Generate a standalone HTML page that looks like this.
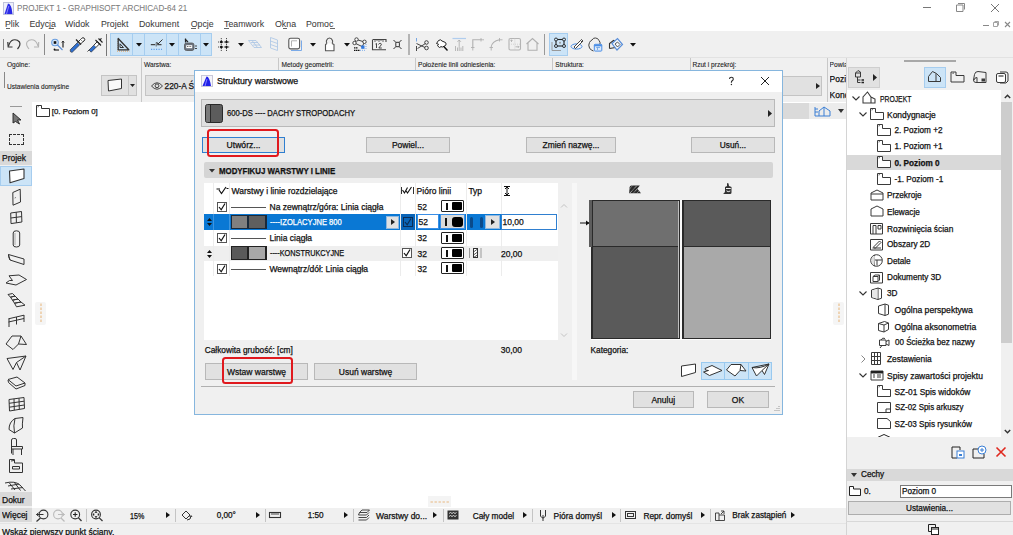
<!DOCTYPE html>
<html><head><meta charset="utf-8">
<style>
*{margin:0;padding:0;box-sizing:border-box}
html,body{width:1013px;height:535px;overflow:hidden;background:#fff;font-family:"Liberation Sans",sans-serif;color:#000}
.a{position:absolute}
.t{position:absolute;white-space:nowrap;font-size:9px;line-height:10px;-webkit-text-stroke:0.25px currentColor}
.btn{position:absolute;background:#e1e1e1;border:1px solid #b8b8b8}
.bt{position:absolute;white-space:nowrap;font-size:9px;line-height:10px;text-align:center;-webkit-text-stroke:0.25px currentColor;color:#111}
svg{position:absolute;overflow:visible}
</style></head><body>

<!-- TITLE BAR -->
<svg style="left:3px;top:2px" width="11" height="13" viewBox="0 0 11 13"><rect x="0.5" y="0.5" width="10" height="12" fill="#eef0fa" stroke="#c0c4dc"/><path d="M1.5 12 L5 1.5 Q8.5 1.5 9.5 12 Z" fill="#2a2ae6"/><path d="M3.5 12 L5.8 4" stroke="#9a9aff" stroke-width="0.8"/></svg>
<div class="t" style="left:17px;top:3px;font-size:8.9px;color:#7a7a7a;-webkit-text-stroke:0.05px #7a7a7a;transform:scaleX(0.91);transform-origin:0 0">PROJEKT 1 - GRAPHISOFT ARCHICAD-64 21</div>
<div class="a" style="left:923px;top:7px;width:8px;height:1px;background:#777"></div>
<svg style="left:956px;top:3px" width="9" height="9" viewBox="0 0 9 9"><path d="M2 0.5 H8.5 V6.5 M0.5 2 H7 V8.5 H0.5 Z" fill="none" stroke="#888" stroke-linejoin="round"/></svg>
<svg style="left:990.5px;top:3.5px" width="8" height="8"><path d="M0 0 L8 8 M8 0 L0 8" stroke="#666" stroke-width="0.9"/></svg>
<div class="t" style="left:5px;top:19px;font-size:8.8px;color:#3c3c3c;-webkit-text-stroke:0.05px #3c3c3c">Plik</div>
<div class="t" style="left:29.5px;top:19px;font-size:8.8px;color:#3c3c3c;-webkit-text-stroke:0.05px #3c3c3c">Edycja</div>
<div class="t" style="left:65px;top:19px;font-size:8.8px;color:#3c3c3c;-webkit-text-stroke:0.05px #3c3c3c">Widok</div>
<div class="t" style="left:101px;top:19px;font-size:8.8px;color:#3c3c3c;-webkit-text-stroke:0.05px #3c3c3c">Projekt</div>
<div class="t" style="left:139px;top:19px;font-size:8.8px;color:#3c3c3c;-webkit-text-stroke:0.05px #3c3c3c">Dokument</div>
<div class="t" style="left:190.7px;top:19px;font-size:8.8px;color:#3c3c3c;-webkit-text-stroke:0.05px #3c3c3c">Opcje</div>
<div class="t" style="left:224px;top:19px;font-size:8.8px;color:#3c3c3c;-webkit-text-stroke:0.05px #3c3c3c">Teamwork</div>
<div class="t" style="left:275px;top:19px;font-size:8.8px;color:#3c3c3c;-webkit-text-stroke:0.05px #3c3c3c">Okna</div>
<div class="t" style="left:306px;top:19px;font-size:8.8px;color:#3c3c3c;-webkit-text-stroke:0.05px #3c3c3c">Pomoc</div>
<div class="a" style="left:6px;top:27.8px;width:4px;height:1px;background:#666"></div>
<div class="a" style="left:50px;top:27.8px;width:4px;height:1px;background:#666"></div>
<div class="a" style="left:190.5px;top:27.8px;width:5px;height:1px;background:#666"></div>
<div class="a" style="left:224px;top:27.8px;width:5px;height:1px;background:#666"></div>
<div class="a" style="left:283px;top:27.8px;width:4px;height:1px;background:#666"></div>
<div class="a" style="left:330px;top:27.8px;width:5px;height:1px;background:#666"></div>
<div class="a" style="left:983px;top:25px;width:6px;height:1.2px;background:#888"></div>
<svg style="left:993px;top:21px" width="6" height="6" viewBox="0 0 6 6"><path d="M1.5 0.5 H5.5 V4.5 M0.5 1.5 H4.5 V5.5 H0.5 Z" fill="none" stroke="#999" stroke-width="0.9"/></svg>
<svg style="left:1004.5px;top:22px" width="5" height="5"><path d="M0 0 L5 5 M5 0 L0 5" stroke="#888" stroke-width="1.1"/></svg>
<!-- TOOLBAR -->
<div class="a" style="left:0;top:31px;width:1013px;height:26px;background:#f0f0f0"></div>
<div class="a" style="left:0;top:56.5px;width:1013px;height:1px;background:#e2e2e2"></div>
<div class="a" style="left:3px;top:39px;width:1.2px;height:10.5px;background:#888"></div>
<div class="a" style="left:43.5px;top:34.2px;width:1.4px;height:20.5px;background:#8a8a8a"></div>
<div class="a" style="left:105.5px;top:34px;width:1px;height:22px;background:#777"></div>
<div class="a" style="left:408.3px;top:34px;width:1.6px;height:21px;background:#b4b4b4"></div>
<div class="a" style="left:544px;top:34px;width:1.3px;height:21px;background:#999"></div>
<svg style="left:0px;top:30px" width="65" height="27" viewBox="0 0 65 27"><path d="M17.5 19 Q21 15 19.5 12 Q17 9 13 10 Q10 11 8.5 16" fill="none" stroke="#333" stroke-width="1.2"/><path d="M7.8 12 L8.2 17 L12.5 17" fill="none" stroke="#333" stroke-width="1.2"/></svg>
<svg style="left:0px;top:30px" width="65" height="27" viewBox="0 0 65 27"><path d="M29 19 Q25.5 15 27 12 Q29.5 9 33.5 10 Q36.5 11 38 16" fill="none" stroke="#b4b4b4" stroke-width="1.1"/><path d="M38.7 12 L38.5 17 L34 17" fill="none" stroke="#b4b4b4" stroke-width="1.1"/></svg>
<svg style="left:0px;top:30px" width="65" height="27" viewBox="0 0 65 27"><circle cx="55" cy="12.5" r="3.3" fill="#d6e6f8" stroke="#6a9ee0" stroke-width="1.1"/><rect x="53.7" y="11.2" width="2.6" height="2.6" fill="#111"/><path d="M57.5 15 L62.5 20" stroke="#5a8ed8" stroke-width="1.1"/><path d="M63 12 V17.5" stroke="#111" stroke-width="1.1"/><path d="M61.8 12.5 L63 11 L64.2 12.5" stroke="#111" fill="none" stroke-width="0.9"/><path d="M54.5 20 H59" stroke="#333" stroke-width="1.3"/><circle cx="54.5" cy="19.5" r="0.9" fill="#111"/></svg>
<svg style="left:60px;top:30px" width="65" height="27" viewBox="0 0 65 27"><path d="M10.2 19.8 L17.5 12.5 L19.8 14.8 L12.5 22 Q10 23 10.2 19.8 Z" fill="#2f6fd0" stroke="#222" stroke-width="0.6"/><path d="M17.5 12.5 L20.5 9.5 L22.8 11.8 L19.8 14.8" fill="#fff" stroke="#222" stroke-width="0.9"/><path d="M20.5 9.5 L21.5 8.5 Q23 7 24.2 8.2 Q25.5 9.5 24 11 L22.8 11.8" fill="#fff" stroke="#222" stroke-width="1"/><path d="M16 9.5 L21 14.5" stroke="#222" stroke-width="1.2"/></svg>
<svg style="left:60px;top:30px" width="65" height="27" viewBox="0 0 65 27"><path d="M27.5 21.5 L29.5 19.5" stroke="#333" stroke-width="0.9"/><path d="M29 20 L34 15 L36.2 17.2 L31.2 22.2 Z" fill="#2f6fd0" stroke="#222" stroke-width="0.6"/><path d="M34 15 L37.5 11.5 L39.7 13.7 L36.2 17.2" fill="#fff" stroke="#222" stroke-width="0.9"/><path d="M35.5 10 L41 15.5 M38.5 8.5 L42.5 12.5 M39.8 10 L41.5 8.3" stroke="#222" stroke-width="1.1"/></svg>
<div class="a" style="left:110px;top:32.5px;width:102px;height:23px;background:#cce4f7;border:1px solid #a6cdef"></div>
<div class="a" style="left:132px;top:33px;width:1px;height:22px;background:#a6cdef"></div>
<div class="a" style="left:143.5px;top:33px;width:1px;height:22px;background:#a6cdef"></div>
<div class="a" style="left:166px;top:33px;width:1px;height:22px;background:#a6cdef"></div>
<div class="a" style="left:177.5px;top:33px;width:1px;height:22px;background:#a6cdef"></div>
<div class="a" style="left:200px;top:33px;width:1px;height:22px;background:#a6cdef"></div>
<svg style="left:108px;top:30px" width="65" height="27" viewBox="0 0 65 27"><path d="M9.5 9 V20.5" stroke="#bbb" stroke-dasharray="1 1"/><path d="M9 21.2 H21.5" stroke="#e8a868" stroke-dasharray="1 1"/><path d="M10.2 8.5 V19.8 H20.8 Z" fill="none" stroke="#333" stroke-width="1.3" stroke-linejoin="round"/><path d="M12 13.8 V17.5 H15.5 Z" fill="none" stroke="#333" stroke-width="1"/></svg>
<svg style="left:108px;top:30px" width="65" height="27" viewBox="0 0 65 27"><path d="M42.8 14.6 H47.2 M49.2 14.6 H53.5" stroke="#444" stroke-width="1.1"/><path d="M48.2 12.5 V16.5" stroke="#444" stroke-width="0.8"/><path d="M48.6 12 L50 14 L54.5 9.5" stroke="#333" stroke-width="1" fill="none"/><path d="M43 19.3 H54" stroke="#4a8ee6" stroke-width="1" stroke-dasharray="1.2 1.3"/></svg>
<svg style="left:170px;top:30px" width="65" height="27" viewBox="0 0 65 27"><path d="M15.5 8.5 V12.5 M15 9 L18 12" stroke="#222" stroke-width="1.2"/><rect x="14.5" y="13" width="9.5" height="7.5" rx="2" fill="#6b7480" stroke="#555" stroke-width="0.8"/><rect x="16.2" y="15.2" width="6" height="3" fill="#fff"/><path d="M17 16.5 H21.5" stroke="#444" stroke-width="0.8" stroke-dasharray="1 0.6"/><path d="M25 16 H27 M25 18.5 H27" stroke="#333" stroke-width="0.9"/></svg>
<svg style="left:135.5px;top:43px" width="6" height="3.5"><path d="M0 0 H6 L3 3.5Z" fill="#111"/></svg>
<svg style="left:169.3px;top:43px" width="6" height="3.5"><path d="M0 0 H6 L3 3.5Z" fill="#111"/></svg>
<svg style="left:203px;top:43px" width="6" height="3.5"><path d="M0 0 H6 L3 3.5Z" fill="#111"/></svg>
<svg style="left:170px;top:30px" width="65" height="27" viewBox="0 0 65 27"><path d="M51.3 8 V21 M56.5 8 V21 M48 12 H60 M48 17 H60" stroke="#222" stroke-width="0.8" stroke-dasharray="1.2 0.8"/><circle cx="51.3" cy="12" r="1.3" fill="#111"/><circle cx="56.5" cy="12" r="1.3" fill="#111"/><circle cx="51.3" cy="17" r="1.3" fill="#111"/><circle cx="56.5" cy="17" r="1.3" fill="#111"/></svg>
<svg style="left:238px;top:43px" width="6" height="3.5"><path d="M0 0 H6 L3 3.5Z" fill="#111"/></svg>
<svg style="left:248px;top:40px" width="14" height="8" viewBox="0 0 14 8"><path d="M0.5 0.5 H8 L13.5 7.5 H6 Z M3 2.5 H10 M5 5 H12 M4 0.5 L9.5 7.5" fill="none" stroke="#a8c4e4" stroke-width="0.8"/></svg>
<svg style="left:270px;top:37px" width="8" height="14" viewBox="0 0 8 14"><path d="M0.5 0.5 L7.5 3 V13.5 L0.5 11 Z M0.5 4 L7.5 6.5 M0.5 7.5 L7.5 10" fill="none" stroke="#a8c4e4" stroke-width="0.8"/></svg>
<svg style="left:285px;top:30px" width="65" height="27" viewBox="0 0 65 27"><path d="M6 20.5 H16.5 V10.5" fill="none" stroke="#7aaae8" stroke-width="1"/><rect x="3.8" y="8.3" width="10.8" height="10.6" rx="1.8" fill="#fff" stroke="#555" stroke-width="1.1"/><path d="M6.5 16.5 V10.8 H12" fill="none" stroke="#aaa" stroke-width="0.9"/></svg>
<svg style="left:309.5px;top:43px" width="6" height="3.5"><path d="M0 0 H6 L3 3.5Z" fill="#111"/></svg>
<svg style="left:285px;top:30px" width="65" height="27" viewBox="0 0 65 27"><path d="M42 13.5 Q41 12 41.5 10.5 Q42.5 8 44.5 8 Q46.5 8 47.5 10.5 Q48 12 47 13.5" fill="none" stroke="#555" stroke-width="1.1"/><path d="M42 13.5 L40.5 14.5 V20.8 H49 V14.5 L47 13.5" fill="#fff" stroke="#555" stroke-width="1.1" stroke-linejoin="round"/></svg>
<svg style="left:343.5px;top:43px" width="6" height="3.5"><path d="M0 0 H6 L3 3.5Z" fill="#111"/></svg>
<svg style="left:345px;top:30px" width="65" height="27" viewBox="0 0 65 27"><path d="M11.5 9.5 L19.5 12 M11.5 9.5 L9.5 13 M9.5 13 L17 16.5 M19.5 12 L17.5 16" stroke="#333" stroke-width="0.9" fill="none"/><circle cx="11.5" cy="9.5" r="1.7" fill="#fff" stroke="#333" stroke-width="0.9"/><circle cx="9.5" cy="13" r="1.7" fill="#fff" stroke="#333" stroke-width="0.9"/><circle cx="19.5" cy="11.8" r="1.7" fill="#fff" stroke="#333" stroke-width="0.9"/><rect x="16.2" y="15.5" width="3.3" height="3.3" fill="#2f78e0"/><path d="M21 14 V20 M15 20.3 H21" stroke="#4a8ee6" stroke-width="0.7" stroke-dasharray="1 1"/><path d="M9 17.8 H13 M9 20.3 H15" stroke="#111" stroke-width="1.3" stroke-dasharray="1.5 0.5"/></svg>
<svg style="left:345px;top:30px" width="65" height="27" viewBox="0 0 65 27"><path d="M28 9.5 H41 V12 M27.5 9.5 V19.7 H41" fill="none" stroke="#444" stroke-width="1.1"/><path d="M30 9.5 V12 M32 9.5 V11 M34 9.5 V12 M36 9.5 V11 M38 9.5 V12" stroke="#444" stroke-width="0.8"/><path d="M30.5 14 L31.5 13.5 V18 M33.5 14.5 Q34 13.3 35.2 13.3 Q36.5 13.5 36.3 14.8 L33.8 18 H36.8" fill="none" stroke="#333" stroke-width="0.9"/></svg>
<svg style="left:345px;top:30px" width="65" height="27" viewBox="0 0 65 27"><path d="M48.5 10 L51.5 13 M56.5 10 L53.5 13 M48.5 19 L51.5 16 M56.5 19 L53.5 16" stroke="#333" stroke-width="1"/><rect x="50.8" y="12.3" width="3.6" height="4.4" rx="0.8" fill="none" stroke="#333" stroke-width="1"/></svg>
<svg style="left:405px;top:30px" width="65" height="27" viewBox="0 0 65 27"><path d="M11.5 8 V11.5" stroke="#6a9ee0" stroke-width="0.9"/><path d="M11.5 16 V21" stroke="#333" stroke-width="0.9"/><path d="M11.5 13.5 L20 17.5 M12.5 18.5 L20.5 13.5" stroke="#333" stroke-width="0.9"/><circle cx="21.5" cy="12.5" r="1.8" fill="none" stroke="#333" stroke-width="0.9"/><circle cx="21.5" cy="18" r="1.8" fill="none" stroke="#333" stroke-width="0.9"/></svg>
<svg style="left:405px;top:30px" width="65" height="27" viewBox="0 0 65 27"><path d="M33.5 10.5 L35.5 9.8 L37 11 L40.5 12.5 Q41.8 14 40.5 15.5 L37.5 17 Q36 16 34.5 17.5 L32.5 15.8 L33.5 14.2 L31.5 13.5 Z" fill="#fff" stroke="#222" stroke-width="1"/><path d="M38.8 16.5 L42.5 20.5" stroke="#111" stroke-width="1.4"/></svg>
<svg style="left:405px;top:30px" width="65" height="27" viewBox="0 0 65 27"><path d="M47.5 8.5 H61" stroke="#b0cdee" stroke-width="1.2"/><path d="M54.2 10 V16.5 M52.5 11.8 L54.2 10 L55.9 11.8" stroke="#aaa" stroke-width="0.8" fill="none"/><path d="M50.5 16 V21 M52.5 17.5 V21 M54.2 16.5 V21 M56 17.5 V21 M57.8 16 V21" stroke="#aaa" stroke-width="0.8"/></svg>
<svg style="left:465px;top:30px" width="65" height="27" viewBox="0 0 65 27"><path d="M7.8 17.5 V9.8 H17.5" fill="none" stroke="#b0b0b0" stroke-width="1.1"/><path d="M16 8 V11.5 M17.5 9.8 H19 M6 17.5 H9.5 M7.8 17.5 V20.5" stroke="#b0b0b0" stroke-width="0.9"/></svg>
<svg style="left:465px;top:30px" width="65" height="27" viewBox="0 0 65 27"><path d="M26 17.5 Q27 11 34.5 9.8" fill="none" stroke="#b0b0b0" stroke-width="1.1"/><path d="M34.5 8 V11.5 M34.5 9.8 H37.5 M24.5 17.5 H28 M26.2 17.5 V20.5" stroke="#b0b0b0" stroke-width="0.9"/></svg>
<svg style="left:465px;top:30px" width="65" height="27" viewBox="0 0 65 27"><rect x="44" y="8.5" width="11.5" height="11.5" rx="1.5" fill="none" stroke="#b4b4b4" stroke-width="1.1"/><path d="M49.8 8.5 V20 M44 14.2 H55.5" stroke="#c8c8c8" stroke-width="0.7" stroke-dasharray="1 1"/><path d="M46.5 12 V9.8 M45.5 10.8 L46.5 9.8 L47.5 10.8 M50.5 16.8 H54 M53 15.8 L54 16.8 L53 17.8" stroke="#aaa" stroke-width="0.8" fill="none"/></svg>
<svg style="left:465px;top:30px" width="65" height="27" viewBox="0 0 65 27"><path d="M61.5 14 L67.5 8.5 L73.5 14 M63 12.8 V20.3 H72 V12.8" stroke="#b0b0b0" stroke-width="1.1" fill="none"/></svg>
<div class="a" style="left:548.5px;top:32.5px;width:19px;height:23px;background:#cce4f7;border:1px solid #a6cdef"></div>
<svg style="left:525px;top:30px" width="65" height="27" viewBox="0 0 65 27"><path d="M27 12 V20.5 H36" fill="none" stroke="#999" stroke-width="1"/><rect x="31" y="9.5" width="8" height="6.5" fill="none" stroke="#222" stroke-width="1.1"/><circle cx="35" cy="12.8" r="1" fill="#999"/><circle cx="31" cy="9.5" r="1.5" fill="#cce4f7" stroke="#222" stroke-width="0.9"/><circle cx="39" cy="9.5" r="1.5" fill="#cce4f7" stroke="#222" stroke-width="0.9"/><circle cx="31" cy="16" r="1.5" fill="#cce4f7" stroke="#222" stroke-width="0.9"/><circle cx="39" cy="16" r="1.5" fill="#cce4f7" stroke="#222" stroke-width="0.9"/></svg>
<svg style="left:525px;top:30px" width="65" height="27" viewBox="0 0 65 27"><ellipse cx="51.5" cy="16.5" rx="5.5" ry="2.6" fill="none" stroke="#4a8ee6" stroke-width="1"/><path d="M49 17 L55.5 10.5 L57 12 L50.5 18.5 Z M55.5 10.5 L56.5 9.5 L58 11 L57 12" fill="#fff" stroke="#333" stroke-width="0.9"/></svg>
<svg style="left:580px;top:30px" width="65" height="27" viewBox="0 0 65 27"><path d="M13.5 21 Q11 20.5 9.5 18 Q8 15 9.5 12.5 Q10.5 10.5 12 10 Q13.5 7.5 15.5 8 Q18 8 19 10.5 Q20.5 12 20 14.5" fill="none" stroke="#444" stroke-width="1"/><rect x="14.3" y="14.3" width="7.5" height="6.8" rx="0.8" fill="#dbe9fa" stroke="#4a8ee6" stroke-width="1"/><path d="M14.3 15.5 H21.8" stroke="#4a8ee6" stroke-width="1.6"/><path d="M16.2 17.5 H20 M17.5 17.5 V20" stroke="#6a9ee0" stroke-width="0.8"/></svg>
<svg style="left:580px;top:30px" width="65" height="27" viewBox="0 0 65 27"><path d="M29.5 18.5 V13.5 L33.5 10.5 L36 12 M29.5 18.5 L35.5 17.5" fill="none" stroke="#333" stroke-width="1.1"/><path d="M32 13.5 L37.5 8.5 L42.5 14.5 L37 20 Z" fill="#f4f8fd" stroke="#5a8ed8" stroke-width="1.2"/><path d="M35 14 L37.5 12 L40 14.5 L37.5 17 Z" fill="none" stroke="#333" stroke-width="0.8"/></svg>
<svg style="left:630px;top:43px" width="6" height="3.5"><path d="M0 0 H6 L3 3.5Z" fill="#111"/></svg>
<!-- INFO BOX -->
<div class="a" style="left:0;top:57.5px;width:846px;height:44.5px;background:#f0f0f0"></div>
<div class="a" style="left:140.5px;top:58px;width:1px;height:44px;background:#c8c8c8"></div>
<div class="a" style="left:689.5px;top:58px;width:1px;height:44px;background:#c8c8c8"></div>
<div class="a" style="left:826.5px;top:58px;width:1px;height:44px;background:#c8c8c8"></div>
<div class="a" style="left:3.5px;top:72px;width:1px;height:16px;background:#888"></div>
<div class="t" style="left:6.9px;top:60px;font-size:6.6px;color:#222;-webkit-text-stroke:0.1px #222">Ogólne:</div>
<div class="t" style="left:6.9px;top:82px;font-size:6.6px;color:#222;-webkit-text-stroke:0.1px #222">Ustawienia domyślne</div>
<div class="a" style="left:101px;top:75.3px;width:35.6px;height:20.5px;background:#e1e1e1;border:1px solid #c4c4c4"></div>
<div class="a" style="left:128px;top:76px;width:1px;height:19px;background:#c8c8c8"></div>
<svg style="left:107px;top:78px" width="16" height="14" viewBox="0 0 16 14"><path d="M1 2.5 L14.5 1 V10.5 L1.5 13 Z" fill="#fafafa" stroke="#333"/></svg>
<svg style="left:129.5px;top:84px" width="5" height="3"><path d="M0 0 H5 L2.5 3Z" fill="#222"/></svg>
<div class="t" style="left:144px;top:60px;font-size:6.6px;color:#222;-webkit-text-stroke:0.1px #222">Warstwa:</div>
<div class="a" style="left:144.7px;top:75.3px;width:60px;height:20.5px;background:#e1e1e1;border:1px solid #c4c4c4"></div>
<svg style="left:150.5px;top:82px" width="12" height="8" viewBox="0 0 12 8"><path d="M0.5 4 Q6 -2.5 11.5 4 Q6 10.5 0.5 4 Z" fill="none" stroke="#333" stroke-width="0.9"/><circle cx="6" cy="3.8" r="1.9" fill="none" stroke="#333" stroke-width="0.9"/></svg>
<div class="t" style="left:164.6px;top:80.5px;font-size:8.3px;color:#111">220-A Ś</div>
<div class="t" style="left:281.4px;top:60px;font-size:6.6px;color:#222;-webkit-text-stroke:0.1px #222">Metody geometrii:</div>
<div class="a" style="left:277.7px;top:58px;width:1px;height:12px;background:#c8c8c8"></div>
<div class="a" style="left:414.7px;top:58px;width:1px;height:12px;background:#c8c8c8"></div>
<div class="t" style="left:418px;top:60px;font-size:6.6px;color:#222;-webkit-text-stroke:0.1px #222">Położenie linii odniesienia:</div>
<div class="a" style="left:552.2px;top:58px;width:1px;height:12px;background:#c8c8c8"></div>
<div class="t" style="left:555.3px;top:60px;font-size:6.6px;color:#222;-webkit-text-stroke:0.1px #222">Struktura:</div>
<div class="t" style="left:692.4px;top:60px;font-size:6.6px;color:#222;-webkit-text-stroke:0.1px #222">Rzut i przekrój:</div>
<div class="a" style="left:782px;top:75.5px;width:40.3px;height:20.6px;background:#e1e1e1;border:1px solid #c4c4c4;border-left:none"></div>
<svg style="left:816px;top:82.5px" width="4" height="6"><path d="M0 0 L4 3 L0 6Z" fill="#222"/></svg>
<div class="t" style="left:829.6px;top:60px;font-size:6.6px;color:#222;-webkit-text-stroke:0.1px #222;width:16.5px;overflow:hidden">Powiązania</div>
<div class="t" style="left:829.6px;top:73.5px;font-size:8.5px;color:#111;width:16.5px;overflow:hidden">Poziom</div>
<div class="t" style="left:829.6px;top:89.5px;font-size:8.5px;color:#111;width:16.5px;overflow:hidden">Kondygnacja</div>
<!-- CANVAS -->
<div class="a" style="left:32px;top:102px;width:814px;height:405.5px;background:#fff"></div>
<div class="a" style="left:0;top:102px;width:32px;height:405.5px;background:#f0f0f0"></div>
<svg style="left:36px;top:105px" width="14" height="12" viewBox="0 0 14 12"><path d="M0.5 0.5 H5.5 V3.5 H13.5 V11.5 H0.5 Z" fill="#fff" stroke="#333"/><path d="M1.5 2 L3 1.5" stroke="#333" stroke-width="0.6"/></svg>
<div class="t" style="left:51.7px;top:106.5px;font-size:7.9px;color:#111">[0. Poziom 0]</div>
<div class="a" style="left:783px;top:102.5px;width:26px;height:16px;background:#dadada"></div><div class="a" style="left:809px;top:102.5px;width:37px;height:16px;background:#ececec"></div>
<svg style="left:814px;top:105.5px" width="18" height="11" viewBox="0 0 18 11"><path d="M1 1 V10 H5 M1 3 H4 M1 6 H4" stroke="#3a7fd5" fill="none"/><path d="M5 10 V5 L10 1 L16 5 V10 Z M10 1 V10" stroke="#3a7fd5" fill="none"/></svg>
<svg style="left:838px;top:108.5px" width="6" height="4"><path d="M0 0 H6 L3 4Z" fill="#333"/></svg>
<div class="a" style="left:34.5px;top:301.7px;width:11.3px;height:23px;background:#f5f5f5;border-radius:2px"></div>
<svg style="left:39.5px;top:303px" width="2" height="21"><path d="M1 0.5 V20.5" stroke="#e8b880" stroke-width="1.1" stroke-dasharray="2.4 1.6"/></svg>
<div class="a" style="left:833px;top:301.7px;width:11px;height:23px;background:#f5f5f5;border-radius:2px"></div>
<svg style="left:838px;top:303px" width="2" height="21"><path d="M1 0.5 V20.5" stroke="#e8b880" stroke-width="1.1" stroke-dasharray="2.4 1.6"/></svg>
<div class="a" style="left:428px;top:496.4px;width:23.4px;height:11px;background:#f4f4f4"></div>
<svg style="left:430px;top:500.5px" width="20" height="2"><path d="M0.5 1 H19.5" stroke="#e8b880" stroke-width="1.1" stroke-dasharray="2.4 1.6"/></svg>
<!-- TOOLBOX -->
<div class="a" style="left:10px;top:106px;width:12px;height:1px;background:#999"></div>
<svg style="left:12px;top:112px" width="10" height="13" viewBox="0 0 10 13"><path d="M1 1 L9 8 L5.5 8 L7.5 12 L3.5 9.5 L1 11 Z" fill="#777" stroke="#222" stroke-width="0.9"/></svg>
<div class="a" style="left:9px;top:134px;width:15px;height:11px;border:1.2px dashed #333"></div>
<div class="a" style="left:0;top:150.6px;width:32px;height:14.1px;background:#d9d9d9"></div>
<div class="t" style="left:2px;top:152.5px;font-size:8.5px;color:#111">Projek</div>
<div class="a" style="left:0;top:166px;width:32px;height:20px;background:#cce4f7;border:1px solid #a6cdef"></div>
<svg style="left:0;top:0" width="32" height="500" viewBox="0 0 32 500"><path d="M9.5 171 L24 169 L24 178.5 L10 182.8 Z" fill="#fff" stroke="#333" stroke-width="1.1" stroke-linejoin="round"/><path d="M12.8 192.5 L20.2 189.2 L20.5 202 L13 205.2 Z" fill="none" stroke="#333" stroke-width="1" stroke-linejoin="round"/><path d="M14.8 198 L15.6 197.6" stroke="#333" stroke-width="1"/><path d="M10.7 213 L21.5 211.5 L21.9 222 L11 223.6 Z M16.2 212.2 L16.4 222.8 M10.8 218 L21.7 216.6" fill="none" stroke="#333" stroke-width="1" stroke-linejoin="round"/><path d="M13.2 233 Q13.2 230.8 16.4 230.8 Q19.7 230.8 19.7 233 L19.7 245 Q19.7 247 16.4 247 Q13.2 247 13.2 245 Z" fill="none" stroke="#333" stroke-width="1" stroke-linejoin="round"/><path d="M15 233 V245" stroke="#999" stroke-width="0.8"/><path d="M8.5 254.5 L24 259 L24 264.5 L10 260 Z M8.5 254.5 L8.5 256.5 L10 260" fill="none" stroke="#333" stroke-width="1" stroke-linejoin="round"/><path d="M9 275.8 L19 275 L26.5 279.5 L16 285 L6 283 L9.5 280.5 L12.5 280.5 Z" fill="none" stroke="#333" stroke-width="1" stroke-linejoin="round"/><path d="M8 294.5 L12.5 293.5 L15 296 L10.5 297.2 Z M10.5 297.2 L15 296 L18 299 L12.5 300.2 Z M12.5 300.2 L18 299 L21 302 L14.5 303.2 Z M14.5 303.2 L21 302 L25 305.2 L16.5 306.8 Z" fill="none" stroke="#333" stroke-width="1" stroke-linejoin="round"/><path d="M8.5 318.8 L24 315.2 M8.5 322 L24 318.5 M9 318.5 V327 M16.5 317 V324.5 M24 315 V322" fill="none" stroke="#333" stroke-width="1" stroke-linejoin="round"/><path d="M6 344 L12 336 L21 336 L26.5 344.5 L18.5 344 L13 349.5 Z M21 336 L18.5 344" fill="none" stroke="#333" stroke-width="1" stroke-linejoin="round"/><path d="M7 358.5 L26 356 L20 370 L16.5 362.5 L13 369.5 Z M26 356 L16.5 362.5" fill="none" stroke="#333" stroke-width="1" stroke-linejoin="round"/><path d="M8 379.5 L17 377 L25 383 L16 386 Z M8 380 L8.5 382.5 L16 389 L25 385.5 L25 383" fill="none" stroke="#333" stroke-width="1" stroke-linejoin="round"/><path d="M9 399.5 L24 397.5 L24.5 408.5 L9.5 411 Z M14 398.8 L14.3 410.2 M19 398.2 L19.3 409.5 M9.1 403.3 L24.1 401.2 M9.3 407.2 L24.3 405" fill="none" stroke="#333" stroke-width="1" stroke-linejoin="round"/><path d="M9 429.5 Q9 422 15 418.5 L23 417.5 Q22 425 22.5 428 L14.5 433 Z M15 418.5 Q13 426 14.5 433" fill="none" stroke="#333" stroke-width="1" stroke-linejoin="round"/><path d="M11.5 453.5 V440 Q11.5 438.5 13.5 438.5 L15 438.5 Q16.5 438.5 16.5 440 V446 M11.5 446.5 L22.5 446.5 L22.5 449 M11.5 449 H22.5 M13 449 V455 M21.5 449 V455" fill="none" stroke="#333" stroke-width="1" stroke-linejoin="round"/><path d="M9.5 459.5 H14.5 V463 H22.5 V472.5 H9.5 Z M12.5 466.5 H19.5 V469 H12.5 Z M11 461 L14 460.5" fill="none" stroke="#333" stroke-width="1" stroke-linejoin="round"/><path d="M5 483 Q15 480.5 20 485 L25.5 491 M8 486 L19 484 M11 489 L23 487.5 M9 482.5 L15 490 M14 482 L20.5 490.5" fill="none" stroke="#333" stroke-width="1" stroke-linejoin="round" stroke-width="0.8"/></svg>
<div class="a" style="left:0;top:492.4px;width:32px;height:13.6px;background:#d9d9d9"></div>
<div class="t" style="left:2px;top:494.5px;font-size:8.5px;color:#111">Dokur</div>
<!-- NAV -->
<div class="a" style="left:846px;top:57.5px;width:167px;height:478px;background:#f0f0f0"></div>
<div class="a" style="left:845.5px;top:57.5px;width:1px;height:478px;background:#d4d4d4"></div>
<div class="a" style="left:904px;top:60.3px;width:52px;height:1.6px;background:#a8a8a8"></div>
<div class="a" style="left:847.7px;top:66.6px;width:32px;height:21px;background:#e1e1e1;border:1px solid #cfcfcf"></div>
<svg style="left:873px;top:73.5px" width="4" height="7"><path d="M0 0 L4 3.5 L0 7Z" fill="#222"/></svg>
<div class="a" style="left:924px;top:66.6px;width:22.2px;height:21px;background:#cce4f7;border:1px solid #a6cdef"></div>
<svg style="left:845px;top:60px" width="168" height="32" viewBox="0 0 168 32"><path d="M10.5 17 V13 L13 10.5 L15.5 12 V17 Z M10.5 13 H15.5" fill="none" stroke="#3a3a3a" stroke-width="1" stroke-linejoin="round"/><path d="M12.5 17 V22.5 H15.5 M12.5 20 H15.5" fill="none" stroke="#3a3a3a" stroke-width="1" stroke-linejoin="round"/><path d="M16.5 20 H19 M16.5 22.5 H19" stroke="#222" stroke-width="1.4"/><path d="M83.5 21.5 V16.5 L87.5 11.5 L91.5 13.5 L95.5 17.5 V21.5 Z M91 13.5 V21.5" fill="none" stroke="#3a3a3a" stroke-width="1" stroke-linejoin="round" stroke-width="1.1"/><path d="M106 12 H111 V15.5 H119 V22 H106 Z" fill="none" stroke="#3a3a3a" stroke-width="1" stroke-linejoin="round" stroke-width="1.1"/><path d="M107.5 13.5 L109 13" stroke="#3a3a3a" stroke-width="0.8"/><path d="M129.5 14.5 Q130 11.5 133 11.5 L141 12.5 V22.5 H131 Q128.5 22.5 128.5 20 Z M129 20 Q129.5 17.5 132 17.5 V22.5" fill="none" stroke="#3a3a3a" stroke-width="1" stroke-linejoin="round" stroke-width="1"/><rect x="136.5" y="18.5" width="3.5" height="3" fill="#3a3a3a"/><path d="M155 12 H161 Q163 12 163 14 V21 L161 23 H155" fill="none" stroke="#3a3a3a" stroke-width="1" stroke-linejoin="round"/><rect x="151.5" y="13.5" width="9" height="9" rx="1.5" fill="#fff" stroke="#3a3a3a" stroke-width="1"/><path d="M153.5 16 H158.5" stroke="#3a3a3a" stroke-width="1.2"/></svg>
<div class="a" style="left:846.5px;top:90px;width:154.5px;height:346.5px;background:#fff"></div>
<div class="a" style="left:1001px;top:90px;width:12px;height:347.4px;background:#f0f0f0"></div>
<div class="a" style="left:1001.3px;top:102.2px;width:10.5px;height:240.4px;background:#cdcdcd"></div>
<svg style="left:1003.8px;top:94px" width="7" height="5"><path d="M0.8 4 L3.5 1.2 L6.2 4" stroke="#333" stroke-width="1.4" fill="none"/></svg>
<svg style="left:1003.8px;top:429px" width="7" height="5"><path d="M0.8 1 L3.5 3.8 L6.2 1" stroke="#333" stroke-width="1.4" fill="none"/></svg>
<div class="a" style="left:846.5px;top:155.3px;width:154.5px;height:15.2px;background:#d9d9d9"></div>
<svg style="left:851.9px;top:95.7px" width="8" height="5"><path d="M0.5 0.5 L4 4 L7.5 0.5" stroke="#333" stroke-width="1.1" fill="none"/></svg>
<svg style="left:862px;top:91.2px" width="14" height="13" viewBox="0 0 14 13"><path d="M1 12 V6 L5.5 1 L9 6 L13 8 V12 Z M9 6 V12" fill="none" stroke="#3a3a3a" stroke-width="1.05"/></svg>
<div class="t" style="left:879.6px;top:93.5px;font-size:8.9px;color:#111;transform:scaleX(0.765);transform-origin:0 50%">PROJEKT</div>
<svg style="left:859.1px;top:112px" width="8" height="5"><path d="M0.5 0.5 L4 4 L7.5 0.5" stroke="#333" stroke-width="1.1" fill="none"/></svg>
<svg style="left:870px;top:107.5px" width="14" height="13" viewBox="0 0 14 13"><path d="M0.5 0.5 H5.5 V4.5 H13.5 V11.5 H0.5 Z" fill="#fff" stroke="#3a3a3a"/><path d="M1.5 2 L3 1.5" stroke="#3a3a3a" stroke-width="0.7"/></svg>
<div class="t" style="left:887px;top:109.66px;font-size:8.45px;color:#111;">Kondygnacje</div>
<svg style="left:877px;top:123.69999999999999px" width="14" height="13" viewBox="0 0 14 13"><path d="M0.5 0.5 H5.5 V4.5 H13.5 V11.5 H0.5 Z" fill="#fff" stroke="#3a3a3a"/><path d="M1.5 2 L3 1.5" stroke="#3a3a3a" stroke-width="0.7"/></svg>
<div class="t" style="left:894.5px;top:126.0px;font-size:8.2px;color:#111;">2. Poziom +2</div>
<svg style="left:877px;top:140.0px" width="14" height="13" viewBox="0 0 14 13"><path d="M0.5 0.5 H5.5 V4.5 H13.5 V11.5 H0.5 Z" fill="#fff" stroke="#3a3a3a"/><path d="M1.5 2 L3 1.5" stroke="#3a3a3a" stroke-width="0.7"/></svg>
<div class="t" style="left:894.5px;top:142.3px;font-size:8.2px;color:#111;">1. Poziom +1</div>
<svg style="left:877px;top:156.3px" width="14" height="13" viewBox="0 0 14 13"><path d="M0.5 0.5 H5.5 V4.5 H13.5 V11.5 H0.5 Z" fill="#fff" stroke="#3a3a3a"/><path d="M1.5 2 L3 1.5" stroke="#3a3a3a" stroke-width="0.7"/></svg>
<div class="t" style="left:894.5px;top:158.6px;font-size:8.2px;color:#111;font-weight:bold;">0. Poziom 0</div>
<svg style="left:877px;top:172.7px" width="14" height="13" viewBox="0 0 14 13"><path d="M0.5 0.5 H5.5 V4.5 H13.5 V11.5 H0.5 Z" fill="#fff" stroke="#3a3a3a"/><path d="M1.5 2 L3 1.5" stroke="#3a3a3a" stroke-width="0.7"/></svg>
<div class="t" style="left:894.5px;top:175.0px;font-size:8.2px;color:#111;">-1. Poziom -1</div>
<svg style="left:870px;top:189.1px" width="14" height="13" viewBox="0 0 14 13"><path d="M1 4 L7 1 L13 4 V11 H1 Z M1 5 H13" fill="none" stroke="#3a3a3a"/></svg>
<div class="t" style="left:887px;top:191.4px;font-size:8.2px;color:#111;">Przekroje</div>
<svg style="left:870px;top:205.3px" width="14" height="13" viewBox="0 0 14 13"><path d="M1 4 L7 1 L13 4 V11 H1 Z" fill="none" stroke="#3a3a3a"/></svg>
<div class="t" style="left:887px;top:207.6px;font-size:8.2px;color:#111;">Elewacje</div>
<svg style="left:870px;top:221.5px" width="14" height="13" viewBox="0 0 14 13"><path d="M0.5 1.5 H12.5 V12 H0.5 Z M3 3.5 H6 V12 M3 3.5 V12 M8 3.5 H11 V7 H8 Z" fill="none" stroke="#3a3a3a" stroke-width="1" stroke-linejoin="round"/></svg>
<div class="t" style="left:887px;top:223.72px;font-size:8.35px;color:#111;">Rozwinięcia ścian</div>
<svg style="left:870px;top:237.9px" width="14" height="13" viewBox="0 0 14 13"><path d="M0.5 1.5 H12.5 V12 H0.5 Z M2.5 10 H11" fill="none" stroke="#3a3a3a" stroke-width="1" stroke-linejoin="round"/><path d="M3.5 9 L9.5 3 L11 4.5 L5 10.5 Z" fill="none" stroke="#3a3a3a" stroke-width="1" stroke-linejoin="round" stroke-width="0.9"/></svg>
<div class="t" style="left:887px;top:240.2px;font-size:8.2px;color:#111;">Obszary 2D</div>
<svg style="left:870px;top:254.3px" width="14" height="13" viewBox="0 0 14 13"><circle cx="6.5" cy="6.5" r="5.8" fill="none" stroke="#3a3a3a" stroke-width="1" stroke-linejoin="round"/><path d="M4.5 1 V12 M4.5 6 H12.3 M7 6 V11.5" fill="none" stroke="#3a3a3a" stroke-width="1" stroke-linejoin="round"/><path d="M5 1.5 Q2 3 1.5 6.5 Q2 10 4.5 11.5 Z" fill="#ddd"/></svg>
<div class="t" style="left:887px;top:256.6px;font-size:8.2px;color:#111;">Detale</div>
<svg style="left:870px;top:270.5px" width="14" height="13" viewBox="0 0 14 13"><path d="M0.5 1.5 H12.5 V12 H0.5 Z" fill="none" stroke="#3a3a3a" stroke-width="1" stroke-linejoin="round"/><path d="M3 5.5 L5 4 H9.5 V9 L8 10.5 H3 Z M3 5.5 H8 V10.5 M8 5.5 L9.5 4" fill="none" stroke="#3a3a3a" stroke-width="1" stroke-linejoin="round" stroke-width="0.9"/></svg>
<div class="t" style="left:887px;top:272.8px;font-size:8.2px;color:#111;">Dokumenty 3D</div>
<svg style="left:859.1px;top:291.4px" width="8" height="5"><path d="M0.5 0.5 L4 4 L7.5 0.5" stroke="#333" stroke-width="1.1" fill="none"/></svg>
<svg style="left:870px;top:286.9px" width="14" height="13" viewBox="0 0 14 13"><path d="M1.5 3 L8 1 L11.5 2.2 V11.2 L8 12.5 L1.5 10.5 Z M8 1 V12.5" fill="none" stroke="#3a3a3a" stroke-width="1" stroke-linejoin="round"/><path d="M2 3.5 L7.5 2 V11.8 L2 10 Z" fill="#e8e8e8"/></svg>
<div class="t" style="left:887px;top:289.2px;font-size:8.2px;color:#111;">3D</div>
<svg style="left:877px;top:303.3px" width="14" height="13" viewBox="0 0 14 13"><path d="M1.5 3 L8 1 L11.5 2.2 V11.2 L8 12.5 L1.5 10.5 Z M8 1 V12.5" fill="none" stroke="#3a3a3a" stroke-width="1" stroke-linejoin="round"/></svg>
<div class="t" style="left:894.5px;top:305.38px;font-size:8.6px;color:#111;">Ogólna perspektywa</div>
<svg style="left:877px;top:319.5px" width="14" height="13" viewBox="0 0 14 13"><path d="M1.5 3.5 L7.5 1.5 L11.5 3 V9.5 L7 12 L1.5 10.5 Z M1.5 3.5 L7 5 L11.5 3 M7 5 V12" fill="none" stroke="#3a3a3a" stroke-width="1" stroke-linejoin="round"/></svg>
<div class="t" style="left:894.5px;top:321.58px;font-size:8.6px;color:#111;">Ogólna aksonometria</div>
<svg style="left:877px;top:335.8px" width="14" height="13" viewBox="0 0 14 13"><path d="M2.5 4 H9 V9.5 H2.5 Z M9 5.5 L12 4 V9.5 L9 8 M5 9.5 L3 12" fill="none" stroke="#3a3a3a" stroke-width="1" stroke-linejoin="round"/><path d="M4 4 Q5.5 1 8 2.5" fill="none" stroke="#3a3a3a" stroke-width="1" stroke-linejoin="round" stroke-width="0.8"/></svg>
<div class="t" style="left:894.5px;top:338.1px;font-size:8.2px;color:#111;transform:scaleX(0.985);transform-origin:0 50%">00 Ścieżka bez nazwy</div>
<svg style="left:860.6px;top:355.1px" width="5" height="8"><path d="M0.5 0.5 L4 4 L0.5 7.5" stroke="#888" stroke-width="1" fill="none"/></svg>
<svg style="left:870px;top:352.1px" width="14" height="13" viewBox="0 0 14 13"><path d="M1.5 0.5 H10.5 V12.5 H1.5 Z M1.5 4.5 H10.5 M1.5 8.5 H10.5 M4.5 0.5 V12.5 M7.5 0.5 V12.5" fill="none" stroke="#3a3a3a" stroke-width="1" stroke-linejoin="round"/></svg>
<div class="t" style="left:887px;top:354.29px;font-size:8.4px;color:#111;">Zestawienia</div>
<svg style="left:859.1px;top:373px" width="8" height="5"><path d="M0.5 0.5 L4 4 L7.5 0.5" stroke="#333" stroke-width="1.1" fill="none"/></svg>
<svg style="left:870px;top:368.5px" width="14" height="13" viewBox="0 0 14 13"><path d="M1 2 H13 V11 H1 Z M1 4 H13 M3 6 H5 M7 6 H11 M3 8 H5 M7 8 H11" fill="none" stroke="#3a3a3a"/><rect x="1" y="2" width="12" height="2" fill="#222"/></svg>
<div class="t" style="left:887px;top:370.63px;font-size:8.5px;color:#111;">Spisy zawartości projektu</div>
<svg style="left:877px;top:384.7px" width="14" height="13" viewBox="0 0 14 13"><path d="M0.5 0.5 H5.5 V4.5 H13.5 V11.5 H0.5 Z" fill="#fff" stroke="#3a3a3a"/><path d="M1.5 2 L3 1.5" stroke="#3a3a3a" stroke-width="0.7"/></svg>
<div class="t" style="left:894.5px;top:386.89px;font-size:8.4px;color:#111;">SZ-01 Spis widoków</div>
<svg style="left:877px;top:401.0px" width="14" height="13" viewBox="0 0 14 13"><path d="M0.5 1.5 H13.5 V11.5 H0.5 Z M9 8 H13.5 M9 8 V11.5" fill="#fff" stroke="#3a3a3a"/></svg>
<div class="t" style="left:894.5px;top:403.3px;font-size:8.2px;color:#111;transform:scaleX(0.965);transform-origin:0 50%">SZ-02 Spis arkuszy</div>
<svg style="left:877px;top:417.3px" width="14" height="13" viewBox="0 0 14 13"><path d="M0.5 1.5 H10 L13.5 4.5 V11.5 H0.5 Z" fill="#fff" stroke="#3a3a3a"/></svg>
<div class="t" style="left:894.5px;top:419.60px;font-size:8.2px;color:#111;">SZ-03 Spis rysunków</div>
<svg style="left:877px;top:434px" width="14" height="4" viewBox="0 0 14 4"><path d="M0.5 3.5 L7 0.5 L13.5 3.5" fill="none" stroke="#222"/></svg>
<div class="a" style="left:846.5px;top:436.5px;width:154.5px;height:4px;background:#f0f0f0"></div>
<svg style="left:951px;top:446px" width="14" height="13" viewBox="0 0 14 13"><path d="M1 1 H9 V4 M1 1 V12 H6" fill="none" stroke="#222"/><rect x="6" y="5" width="7" height="7" fill="#fff" stroke="#3a7fd5"/><rect x="8" y="8" width="3" height="2" fill="#3a7fd5"/></svg>
<svg style="left:972px;top:445px" width="15" height="14" viewBox="0 0 15 14"><path d="M1 4 H6 M1 4 V13 H12 V9" fill="none" stroke="#222"/><circle cx="10" cy="5" r="4" fill="#fff" stroke="#3a7fd5"/><path d="M8 5 H12 M10 3 V7" stroke="#3a7fd5"/></svg>
<svg style="left:996px;top:447px" width="10" height="10"><path d="M0.5 0.5 L9.5 9.5 M9.5 0.5 L0.5 9.5" stroke="#e0281e" stroke-width="1.6"/></svg>
<div class="a" style="left:846.5px;top:469px;width:166.5px;height:11.5px;background:#d9d9d9"></div>
<svg style="left:851px;top:473px" width="6" height="4"><path d="M0 0 H6 L3 4Z" fill="#333"/></svg>
<div class="t" style="left:861px;top:470px;font-size:8.2px;color:#111">Cechy</div>
<svg style="left:849px;top:486px" width="12" height="10" viewBox="0 0 12 10"><path d="M0.5 0.5 H4.5 V3 H11.5 V9.5 H0.5 Z" fill="#fff" stroke="#222"/></svg>
<div class="t" style="left:864px;top:486.5px;font-size:8.2px;color:#111">0.</div>
<div class="a" style="left:899.5px;top:484.5px;width:112px;height:13.7px;background:#fff;border:1px solid #7a7a7a"></div>
<div class="t" style="left:902px;top:486.5px;font-size:8.2px;color:#111">Poziom 0</div>
<div class="btn" style="left:848px;top:501.4px;width:163px;height:13.8px;background:#e1e1e1;border-color:#adadad"></div>
<div class="bt" style="left:848px;top:503.5px;width:163px;font-size:8.2px">Ustawienia...</div>
<div class="a" style="left:846px;top:520.5px;width:167px;height:1px;background:#d8d8d8"></div>
<svg style="left:928px;top:524px" width="11" height="11" viewBox="0 0 11 11"><path d="M0.5 0.5 H7.5 V3 M0.5 0.5 V7.5 H3" fill="none" stroke="#222"/><rect x="3.5" y="3.5" width="7" height="7" fill="#fff" stroke="#222"/><path d="M3.5 5 H10.5" stroke="#222"/></svg>
<!-- STATUS -->
<div class="a" style="left:0;top:507.5px;width:846px;height:15px;background:#f0f0f0"></div>
<div class="a" style="left:0;top:522.5px;width:846px;height:12.5px;background:#f0f0f0;border-top:1px solid #e4e4e4"></div>
<div class="a" style="left:0;top:508px;width:32px;height:14px;background:#d9d9d9"></div>
<div class="t" style="left:2px;top:510px;font-size:8.5px;color:#111;width:26.5px;overflow:hidden">Więcej</div>
<div class="a" style="left:32px;top:508px;width:0;height:14px"></div>
<svg style="left:30px;top:503px" width="90" height="22" viewBox="0 0 90 22"><circle cx="13.5" cy="11.5" r="4.4" fill="none" stroke="#333" stroke-width="1.1"/><path d="M13.5 11.5 H6.5 M8.5 9.8 L6.5 11.5 L8.5 13.2" fill="none" stroke="#333" stroke-width="1"/><path d="M10.5 15 L6.5 18.5" stroke="#333" stroke-width="1.2"/><circle cx="28" cy="11.5" r="4.4" fill="none" stroke="#bbb" stroke-width="1.1"/><path d="M28 11.5 H34.5 M32.5 9.8 L34.5 11.5 L32.5 13.2" fill="none" stroke="#bbb" stroke-width="1"/><path d="M31 15 L34.5 18.5" stroke="#bbb" stroke-width="1.2"/><circle cx="45.2" cy="11.5" r="4.4" fill="none" stroke="#333" stroke-width="1.1"/><path d="M43 11.5 H47.4 M45.2 9.3 V13.7" stroke="#222" stroke-width="1.1"/><path d="M48.3 14.6 L51.5 18" stroke="#333" stroke-width="1.3"/><circle cx="66" cy="11.5" r="4.4" fill="none" stroke="#333" stroke-width="1.1"/><path d="M66 8.3 L65 9.5 H67 Z M66 14.7 L65 13.5 H67 Z M62.8 11.5 L64 10.5 V12.5 Z M69.2 11.5 L68 10.5 V12.5 Z" fill="#222" stroke="#222" stroke-width="0.6"/><path d="M69 14.6 L72.5 18" stroke="#333" stroke-width="1.3"/></svg>
<div class="a" style="left:86.4px;top:508.5px;width:1px;height:13px;background:#c4c4c4"></div>
<div class="a" style="left:175.2px;top:508.5px;width:1px;height:13px;background:#c4c4c4"></div>
<div class="a" style="left:264.9px;top:508.5px;width:1px;height:13px;background:#c4c4c4"></div>
<div class="a" style="left:353.3px;top:508.5px;width:1px;height:13px;background:#c4c4c4"></div>
<div class="a" style="left:442.6px;top:508.5px;width:1px;height:13px;background:#c4c4c4"></div>
<div class="a" style="left:531.8px;top:508.5px;width:1px;height:13px;background:#c4c4c4"></div>
<div class="a" style="left:620.2px;top:508.5px;width:1px;height:13px;background:#c4c4c4"></div>
<div class="a" style="left:709.7px;top:508.5px;width:1px;height:13px;background:#c4c4c4"></div>
<div class="t" style="left:129.6px;top:510.5px;font-size:8.4px;color:#111;transform:scaleX(0.85);transform-origin:0 50%">15%</div>
<svg style="left:181px;top:510px" width="11" height="11" viewBox="0 0 11 11"><path d="M1 5 L5 1 L9 5 L5 9 Z" fill="none" stroke="#333"/><path d="M6 10 Q10 10 10 6 M8.5 7 L10 5.5 L11 7" stroke="#333" fill="none"/></svg>
<div class="t" style="left:216.7px;top:510.5px;font-size:8.2px;color:#111">0,00°</div>
<svg style="left:268px;top:511px" width="14" height="8" viewBox="0 0 14 8"><rect x="1.5" y="1.5" width="11" height="5" fill="none" stroke="#333" stroke-width="1.1"/><path d="M4 1.5 V4 M6 1.5 V4 M8 1.5 V4 M10 1.5 V4" stroke="#333" stroke-width="0.9"/></svg>
<div class="t" style="left:307.7px;top:510.5px;font-size:8.2px;color:#111">1:50</div>
<svg style="left:357px;top:509px" width="14" height="12" viewBox="0 0 14 12"><path d="M2.5 3.5 L5 1 H12.5 L10 3.5 Z" fill="none" stroke="#333" stroke-width="0.9"/><path d="M1.5 6 H9.5 L12 3.5 M1.5 8.5 H9.5 L12 6 M1.5 11 H9.5 L12 8.5 M1.5 6 L2.5 3.5" fill="none" stroke="#333" stroke-width="0.9"/></svg>
<div class="t" style="left:376px;top:510.5px;font-size:8.5px;color:#111">Warstwy do...</div>
<svg style="left:447px;top:510px" width="12" height="10" viewBox="0 0 12 10"><rect x="0.5" y="0.5" width="11" height="9" fill="#333"/><path d="M2 3.5 L3.5 2.5 L5 3.5 L6.5 2.5 L8 3.5 L9.5 2.5 M2 6.5 L3.5 5.5 L5 6.5 L6.5 5.5 L8 6.5 L9.5 5.5" fill="none" stroke="#fff" stroke-width="0.8"/></svg>
<div class="t" style="left:472.7px;top:510.5px;font-size:8.3px;color:#111">Cały model</div>
<svg style="left:539.5px;top:510px" width="6" height="11" viewBox="0 0 6 11"><path d="M0.5 0 V6 Q3 10 5.5 6 V0 M3 5 V11" stroke="#333" fill="none"/></svg>
<div class="t" style="left:553.6px;top:510.5px;font-size:8.4px;color:#111">Pióra domyśl</div>
<svg style="left:625px;top:511px" width="11" height="8" viewBox="0 0 11 8"><rect x="0.5" y="0.5" width="10" height="7" fill="none" stroke="#333"/><rect x="2.5" y="2.5" width="6" height="3" fill="none" stroke="#333"/></svg>
<div class="t" style="left:643.4px;top:510.5px;font-size:8.4px;color:#111">Repr. domyśl</div>
<svg style="left:715px;top:510px" width="10" height="11" viewBox="0 0 10 11"><path d="M0.5 3 H4 V10.5 H0.5 Z M4 5 H9.5 V10.5 H4 M6 1 H9 V4 M6 4 L9 1" fill="none" stroke="#333" stroke-width="0.9"/></svg>
<div class="t" style="left:732.2px;top:510.5px;font-size:8.2px;color:#111">Brak zastąpień</div>
<svg style="left:166.3px;top:512px" width="4" height="6"><path d="M0 0 L4 3 L0 6Z" fill="#111"/></svg>
<svg style="left:255.5px;top:512px" width="4" height="6"><path d="M0 0 L4 3 L0 6Z" fill="#111"/></svg>
<svg style="left:344.4px;top:512px" width="4" height="6"><path d="M0 0 L4 3 L0 6Z" fill="#111"/></svg>
<svg style="left:433.4px;top:512px" width="4" height="6"><path d="M0 0 L4 3 L0 6Z" fill="#111"/></svg>
<svg style="left:522.7px;top:512px" width="4" height="6"><path d="M0 0 L4 3 L0 6Z" fill="#111"/></svg>
<svg style="left:611.5px;top:512px" width="4" height="6"><path d="M0 0 L4 3 L0 6Z" fill="#111"/></svg>
<svg style="left:700.6px;top:512px" width="4" height="6"><path d="M0 0 L4 3 L0 6Z" fill="#111"/></svg>
<svg style="left:790.5px;top:512px" width="4" height="6"><path d="M0 0 L4 3 L0 6Z" fill="#111"/></svg>
<div class="t" style="left:2px;top:526.5px;font-size:8.5px;color:#111">Wskaż pierwszy punkt ściany.</div>
<!-- DIALOG -->
<div class="a" style="left:194px;top:70px;width:589px;height:345px;background:#f0f0f0;border:1px solid #86b6de"></div>
<div class="a" style="left:195px;top:71px;width:587px;height:21px;background:#fff"></div>
<svg style="left:201px;top:75px" width="12" height="12" viewBox="0 0 12 12"><rect x="0.5" y="0.5" width="11" height="11" fill="#f4f4fa" stroke="#c8c8d8"/><path d="M1.5 11 L5.5 1.5 Q8.5 1.5 10 11 Z" fill="#2020e8"/><path d="M4 11 L6 4" stroke="#8080ff" stroke-width="1"/></svg>
<div class="t" style="left:217px;top:76px;font-size:8.8px;color:#111">Struktury warstwowe</div>
<svg style="left:728px;top:76px" width="7" height="10" viewBox="0 0 7 10"><path d="M1.5 3 Q1.5 1.3 3.4 1.3 Q5.3 1.3 5.3 2.9 Q5.3 4 4.2 4.7 Q3.4 5.2 3.4 6.3 V6.8" fill="none" stroke="#2a2a2a" stroke-width="1.1"/><circle cx="3.4" cy="8.5" r="0.7" fill="#2a2a2a"/></svg>
<svg style="left:761px;top:77px" width="8" height="8"><path d="M0 0 L8 8 M8 0 L0 8" stroke="#222" stroke-width="1"/></svg>

<!-- combo -->
<div class="a" style="left:201px;top:99px;width:574px;height:28px;background:#e0e0e0;border:1px solid #b9b9b9"></div>
<div class="a" style="left:204.8px;top:103.5px;width:18.5px;height:19.2px;background:#5c5c5c;border:1px solid #2a2a2a;border-radius:2.5px"></div>
<div class="a" style="left:205.8px;top:104.5px;width:4px;height:17.2px;background:#7a7a7a;border-radius:1.5px 0 0 1.5px"></div>
<div class="a" style="left:209.8px;top:104.5px;width:1px;height:17.2px;background:#2a2a2a"></div>
<div class="t" style="left:226.5px;top:108.3px;font-size:8.6px;color:#111;transform:scaleX(0.889);transform-origin:0 50%">600-DS ---- DACHY STROPODACHY</div>
<svg style="left:768px;top:110px" width="4" height="7"><path d="M0 0 L4 3.5 L0 7Z" fill="#222"/></svg>

<!-- buttons row -->
<div class="btn" style="left:202px;top:136.5px;width:83px;height:16px;border:1px solid #2f7fd0"></div>
<div class="bt" style="left:202px;top:139.5px;width:83px;font-size:8.6px">Utwórz...</div>
<div class="btn" style="left:366px;top:136.5px;width:84px;height:16px"></div>
<div class="bt" style="left:366px;top:139.5px;width:84px;font-size:8.5px">Powiel...</div>
<div class="btn" style="left:526px;top:136.5px;width:90px;height:16px"></div>
<div class="bt" style="left:526px;top:139.5px;width:90px;font-size:8.4px">Zmień nazwę...</div>
<div class="btn" style="left:691px;top:136.5px;width:84px;height:16px"></div>
<div class="bt" style="left:691px;top:139.5px;width:84px;font-size:8.3px">Usuń...</div>
<div class="a" style="left:207px;top:129px;width:72px;height:28px;border:2.3px solid #e0191e;border-radius:3.5px"></div>

<!-- section header -->
<div class="a" style="left:204px;top:162px;width:569px;height:16px;background:#d5d5d5;border-radius:2px"></div>
<svg style="left:208.5px;top:168.5px" width="6" height="3.5"><path d="M0 0 L6 0 L3 3.5Z" fill="#333"/></svg>
<div class="t" style="left:219.3px;top:165.5px;font-size:8.4px;font-weight:bold;color:#111;transform:scaleX(0.94);transform-origin:0 50%">MODYFIKUJ WARSTWY I LINIE</div>

<!-- table -->
<div class="a" style="left:204px;top:183px;width:354px;height:157px;background:#fff"></div>
<div class="a" style="left:558px;top:183px;width:14px;height:157px;background:#f0f0f0"></div>
<div class="a" style="left:572px;top:183px;width:5px;height:197px;background:#f7f7f7"></div>
<svg style="left:561px;top:204px" width="6" height="4"><path d="M0 3.5 L3 0.5 L6 3.5" stroke="#c4c4c4" fill="none"/></svg>
<svg style="left:561px;top:333px" width="6" height="4"><path d="M0 0.5 L3 3.5 L6 0.5" stroke="#c4c4c4" fill="none"/></svg>
<div class="a" style="left:204px;top:245.5px;width:354px;height:15px;background:#efefef"></div>
<div class="a" style="left:204px;top:214.2px;width:297px;height:15.4px;background:#0a78d4"></div>
<div class="a" style="left:400px;top:214.2px;width:15px;height:15.4px;background:#0a64b8"></div>
<div class="a" style="left:213px;top:183px;width:1px;height:92.5px;background:#ececec"></div>
<div class="a" style="left:229px;top:183px;width:1px;height:92.5px;background:#ececec"></div>
<div class="a" style="left:400px;top:183px;width:1px;height:92.5px;background:#ececec"></div>
<div class="a" style="left:415px;top:183px;width:1px;height:92.5px;background:#ececec"></div>
<div class="a" style="left:466px;top:183px;width:1px;height:92.5px;background:#ececec"></div>
<div class="a" style="left:501px;top:183px;width:1px;height:92.5px;background:#ececec"></div>
<div class="a" style="left:213px;top:214.2px;width:1px;height:15.4px;background:#3d95e0"></div>
<div class="a" style="left:229px;top:214.2px;width:1px;height:15.4px;background:#3d95e0"></div>
<svg style="left:216px;top:186px" width="13" height="9" viewBox="0 0 13 9"><path d="M0.5 3 L4 3 M3 4 L5.5 7.5 L10 1" stroke="#111" stroke-width="1.2" fill="none"/><path d="M10.5 2.5 L12.5 2.5" stroke="#111"/></svg>
<div class="t" style="left:231.6px;top:186.3px;font-size:8.5px;color:#111">Warstwy i linie rozdzielające</div>
<svg style="left:401px;top:186px" width="13" height="9" viewBox="0 0 13 9"><path d="M0.5 1 L0.5 8 M12.5 1 L12.5 8" stroke="#333"/><path d="M1.5 4 L3.5 7 L6.5 1.5 M4.5 4 L6.5 7 L10.5 1" stroke="#111" stroke-width="1.1" fill="none"/></svg>
<div class="t" style="left:416.6px;top:186.3px;font-size:8.5px;color:#111">Pióro linii</div>
<div class="t" style="left:468.4px;top:186.3px;font-size:8.5px;color:#111">Typ</div>
<svg style="left:504px;top:185.5px" width="6" height="10" viewBox="0 0 6 10"><path d="M0 0.5 L6 0.5 M0 9.5 L6 9.5 M3 1 L3 9" stroke="#111"/><path d="M1 3 L3 1 L5 3 M1 7 L3 9 L5 7" stroke="#111" fill="none"/></svg>
<svg style="left:217px;top:201.5px" width="10" height="10" viewBox="0 0 10 10"><rect x="0.5" y="0.5" width="9" height="9" fill="#fff" stroke="#555"/><path d="M2 5 L4.2 7.8 L8 1.5" stroke="#111" stroke-width="1.2" fill="none"/></svg>
<div class="a" style="left:231px;top:206.5px;width:35px;height:1.2px;background:#555"></div>
<div class="t" style="left:269.5px;top:201.8px;font-size:8.5px;color:#111">Na zewnątrz/góra: Linia ciągła</div>
<div class="t" style="left:417.6px;top:201.8px;font-size:8.5px;color:#111">52</div>
<div class="a" style="left:441px;top:200.2px;width:23px;height:12px;background:#fff;border:1px solid #222;border-radius:1px"></div><div class="a" style="left:446px;top:203.2px;width:1.5px;height:7px;background:#111"></div><div class="a" style="left:452px;top:202.2px;width:10px;height:8px;background:#000;border-radius:1px"></div>
<svg style="left:207px;top:218px" width="5" height="8" viewBox="0 0 5 8"><path d="M0 3 L2.5 0 L5 3Z M0 5 L2.5 8 L5 5Z" fill="#111"/></svg>
<div class="a" style="left:230.5px;top:215px;width:36px;height:13.5px;background:#1b2a3a"></div>
<div class="a" style="left:231.5px;top:216px;width:15.5px;height:11.5px;background:#808080"></div>
<div class="a" style="left:248.5px;top:216px;width:16.5px;height:11.5px;background:#5f5f5f"></div>
<div class="t" style="left:269.5px;top:216.8px;font-size:8.5px;color:#fff;transform:scaleX(0.894);transform-origin:0 50%">----IZOLACYJNE 800</div>
<div class="a" style="left:386px;top:215.5px;width:13px;height:13px;background:#e1e1e1;border:1px solid #8fb8e0"></div>
<svg style="left:391px;top:219px" width="4" height="6"><path d="M0 0 L4 3 L0 6Z" fill="#222"/></svg>
<svg style="left:402.5px;top:217px" width="10" height="10" viewBox="0 0 10 10"><rect x="0.5" y="0.5" width="9" height="9" fill="#0a64b8" stroke="#0c2d55"/><path d="M2 5 L4.2 7.8 L8 1.5" stroke="#0c2d55" stroke-width="1.2" fill="none"/></svg>
<div class="a" style="left:416.5px;top:214.4px;width:22.5px;height:15px;background:#fff;border:1px solid #3a8ee6"></div>
<div class="t" style="left:418.5px;top:217.4px;font-size:8.5px;color:#111">52</div>
<div class="a" style="left:440px;top:214.4px;width:24.5px;height:15px;background:#d9d9d9;border:1px solid #3a8ee6"></div>
<div class="a" style="left:445px;top:218px;width:1.5px;height:8px;background:#111"></div>
<div class="a" style="left:451.5px;top:217px;width:11px;height:10px;background:#000;border-radius:3px"></div>
<div class="a" style="left:469.5px;top:216.5px;width:3px;height:11px;background:#0a4a8a;border-radius:1.5px"></div>
<div class="a" style="left:479.5px;top:216.5px;width:3px;height:11px;background:#0a4a8a;border-radius:1.5px"></div>
<div class="a" style="left:485.3px;top:214.8px;width:14.3px;height:14.4px;background:#e1e1e1;border:1px solid #8fb8e0"></div>
<svg style="left:491px;top:219px" width="4" height="6"><path d="M0 0 L4 3 L0 6Z" fill="#222"/></svg>
<div class="a" style="left:501px;top:214.2px;width:56px;height:15.4px;background:#fff;border:1px solid #2f7fd0"></div>
<div class="t" style="left:502.5px;top:217.2px;font-size:8.5px;color:#111">10,00</div>
<svg style="left:217px;top:233px" width="10" height="10" viewBox="0 0 10 10"><rect x="0.5" y="0.5" width="9" height="9" fill="#fff" stroke="#555"/><path d="M2 5 L4.2 7.8 L8 1.5" stroke="#111" stroke-width="1.2" fill="none"/></svg>
<div class="a" style="left:231px;top:238px;width:35px;height:1.2px;background:#555"></div>
<div class="t" style="left:269.5px;top:233.3px;font-size:8.5px;color:#111">Linia ciągła</div>
<div class="t" style="left:417.6px;top:233.3px;font-size:8.5px;color:#111">32</div>
<div class="a" style="left:441px;top:231.5px;width:23px;height:12px;background:#fff;border:1px solid #222;border-radius:1px"></div><div class="a" style="left:446px;top:234.5px;width:1.5px;height:7px;background:#111"></div><div class="a" style="left:452px;top:233.5px;width:10px;height:8px;background:#000;border-radius:1px"></div>
<svg style="left:207px;top:249.5px" width="5" height="8" viewBox="0 0 5 8"><path d="M0 3 L2.5 0 L5 3Z M0 5 L2.5 8 L5 5Z" fill="#111"/></svg>
<div class="a" style="left:230.5px;top:246px;width:36px;height:13.5px;background:#222"></div>
<div class="a" style="left:231.5px;top:247px;width:15.5px;height:11.5px;background:#5a5a5a"></div>
<div class="a" style="left:248.5px;top:247px;width:16.5px;height:11.5px;background:#a8a8a8"></div>
<div class="t" style="left:269.5px;top:248.3px;font-size:8.5px;color:#111;transform:scaleX(0.859);transform-origin:0 50%">----KONSTRUKCYJNE</div>
<svg style="left:402.2px;top:248px" width="10" height="10" viewBox="0 0 10 10"><rect x="0.5" y="0.5" width="9" height="9" fill="#fff" stroke="#555"/><path d="M2 5 L4.2 7.8 L8 1.5" stroke="#111" stroke-width="1.2" fill="none"/></svg>
<div class="t" style="left:417.6px;top:248.5px;font-size:8.5px;color:#111">32</div>
<div class="a" style="left:441px;top:246.5px;width:23px;height:12px;background:#fff;border:1px solid #222;border-radius:1px"></div><div class="a" style="left:446px;top:249.5px;width:1.5px;height:7px;background:#111"></div><div class="a" style="left:452px;top:248.5px;width:10px;height:8px;background:#000;border-radius:1px"></div>
<svg style="left:469px;top:247px" width="13" height="12" viewBox="0 0 13 12"><path d="M0.5 1 L0.5 11 M12 1 L12 11" stroke="#999"/><rect x="4.5" y="1.5" width="4" height="9" fill="#fff" stroke="#333"/><path d="M4.5 5 L8.5 2 M4.5 8 L8.5 5 M4.5 10.5 L8.5 8" stroke="#333" stroke-width="0.8"/></svg>
<div class="t" style="left:501px;top:248.5px;font-size:8.5px;color:#111">20,00</div>
<svg style="left:217px;top:264px" width="10" height="10" viewBox="0 0 10 10"><rect x="0.5" y="0.5" width="9" height="9" fill="#fff" stroke="#555"/><path d="M2 5 L4.2 7.8 L8 1.5" stroke="#111" stroke-width="1.2" fill="none"/></svg>
<div class="a" style="left:231px;top:269px;width:35px;height:1.2px;background:#555"></div>
<div class="t" style="left:269.5px;top:264.3px;font-size:8.5px;color:#111">Wewnątrz/dół: Linia ciągła</div>
<div class="t" style="left:417.6px;top:264.3px;font-size:8.5px;color:#111">32</div>
<div class="a" style="left:441px;top:262px;width:23px;height:12px;background:#fff;border:1px solid #222;border-radius:1px"></div><div class="a" style="left:446px;top:265px;width:1.5px;height:7px;background:#111"></div><div class="a" style="left:452px;top:264px;width:10px;height:8px;background:#000;border-radius:1px"></div>
<div class="t" style="left:204.7px;top:344.5px;font-size:8.3px;color:#111">Całkowita grubość: [cm]</div>
<div class="t" style="left:500.7px;top:344.5px;font-size:8.5px;color:#111">30,00</div>
<div class="btn" style="left:205px;top:363px;width:103px;height:16.5px"></div>
<div class="bt" style="left:205px;top:366.5px;width:103px;font-size:8.5px">Wstaw warstwę</div>
<div class="btn" style="left:314px;top:363px;width:103px;height:16.5px"></div>
<div class="bt" style="left:314px;top:366.5px;width:103px;font-size:8.5px">Usuń warstwę</div>
<div class="a" style="left:222px;top:357px;width:71px;height:27px;border:2.3px solid #e0191e;border-radius:3.5px"></div>
<div class="a" style="left:201px;top:386px;width:574px;height:1px;background:#b0b0b0"></div>
<div class="btn" style="left:632.5px;top:391px;width:61.5px;height:16.5px"></div>
<div class="bt" style="left:632.5px;top:394.5px;width:61.5px;font-size:8.5px">Anuluj</div>
<div class="btn" style="left:707px;top:391px;width:62px;height:16.5px"></div>
<div class="bt" style="left:707px;top:394.5px;width:62px;font-size:8.5px">OK</div>
<svg style="left:620px;top:178px" width="30" height="20" viewBox="0 0 30 20"><defs><clipPath id="hc"><path d="M9.5 9.5 Q9.8 7.5 11.5 7.5 L19.8 7.5 L17.3 10.8 L21 15.3 L9.2 15.3 Z"/></clipPath></defs><path d="M9.5 9.5 Q9.8 7.5 11.5 7.5 L19.8 7.5 L17.3 10.8 L21 15.3 L9.2 15.3 Z" fill="#2a2a2a"/><g clip-path="url(#hc)"><path d="M8.5 12 L13.5 6.5 M10 15 L17 7.5 M13 15.5 L18.5 9.5 M16.5 15.5 L20 12" stroke="#f0f0f0" stroke-width="0.8" stroke-dasharray="1 0.7"/></g></svg>
<svg style="left:715px;top:178px" width="30" height="20" viewBox="0 0 30 20"><path d="M12 5.5 Q12.8 4.5 13.5 5.5 L14 8 L16.5 9 V14.5 Q16.5 16 15 16 L8 16 Q9.5 15 10 13.5 V9 L12 8 Z" fill="#333"/><path d="M11 10.5 H15.8 M11.5 12.8 Q13 14.5 15.3 13" stroke="#f0f0f0" stroke-width="1" fill="none"/></svg>
<div class="a" style="left:591.3px;top:199.5px;width:88.5px;height:139.5px;background:#2a2a2a"></div>
<div class="a" style="left:589.3px;top:199.5px;width:2.7px;height:47px;background:#5c5c5c"></div>
<div class="a" style="left:592.5px;top:200.5px;width:86px;height:45.3px;background:#6f6f6f"></div>
<div class="a" style="left:677.5px;top:200.5px;width:1.1px;height:137.5px;background:#bdbdbd"></div>
<div class="a" style="left:592.5px;top:247px;width:85px;height:91px;background:#5a5a5a"></div>
<div class="a" style="left:679.8px;top:199.5px;width:2.6px;height:140px;background:#fafafa"></div>
<div class="a" style="left:682.4px;top:199.5px;width:88.9px;height:139.5px;background:#2a2a2a"></div>
<div class="a" style="left:683.5px;top:200.5px;width:86.8px;height:45.3px;background:#5a5a5a"></div>
<div class="a" style="left:683.5px;top:247px;width:86.8px;height:91px;background:#a9a9a9"></div>
<div class="a" style="left:591.3px;top:339px;width:180px;height:1px;background:#fff"></div>
<svg style="left:580px;top:220px" width="10" height="6" viewBox="0 0 10 6"><path d="M0 3 L9 3" stroke="#111"/><path d="M6 0.5 L9.5 3 L6 5.5Z" fill="#111"/></svg>
<div class="t" style="left:590.5px;top:344.5px;font-size:8.3px;color:#111">Kategoria:</div>

<div class="a" style="left:700.5px;top:361.5px;width:71px;height:18px;background:#cce4f7;border:1px solid #99c9ef"></div>
<div class="a" style="left:724px;top:362px;width:1px;height:17px;background:#99c9ef"></div>
<div class="a" style="left:748px;top:362px;width:1px;height:17px;background:#99c9ef"></div>
<svg style="left:675px;top:355px" width="100" height="30" viewBox="0 0 100 30"><path d="M6.5 11 L20.5 9 L20.5 17.5 L6.5 21.5 Z" fill="#fff" stroke="#333" stroke-width="1" stroke-linejoin="round"/><path d="M30 13.5 L37 10.5 L47 15.5 L34.5 20.5 L28.5 17 L33.5 15.5 L30.5 15 Z" fill="#fff" stroke="#333" stroke-width="1" stroke-linejoin="round"/><path d="M51.5 15 L56 9.5 L66 9.5 L71 16 L65 15.5 L60 21 Z M66 9.5 L65 15.5" fill="#fff" stroke="#333" stroke-width="1" stroke-linejoin="round"/><path d="M77 12.5 L94 9 L89.5 19.5 L87 15.5 L81.5 21 Z M77 12.5 Q85 14 94 9 M87 15.5 L94 9" fill="#fff" stroke="#333" stroke-width="1" stroke-linejoin="round"/></svg>
<svg style="left:774px;top:406px" width="6" height="6" viewBox="0 0 6 6"><path d="M5 0v1M3 2v1M5 2v1M1 4v1M3 4v1M5 4v1" stroke="#999"/></svg>

</body></html>
